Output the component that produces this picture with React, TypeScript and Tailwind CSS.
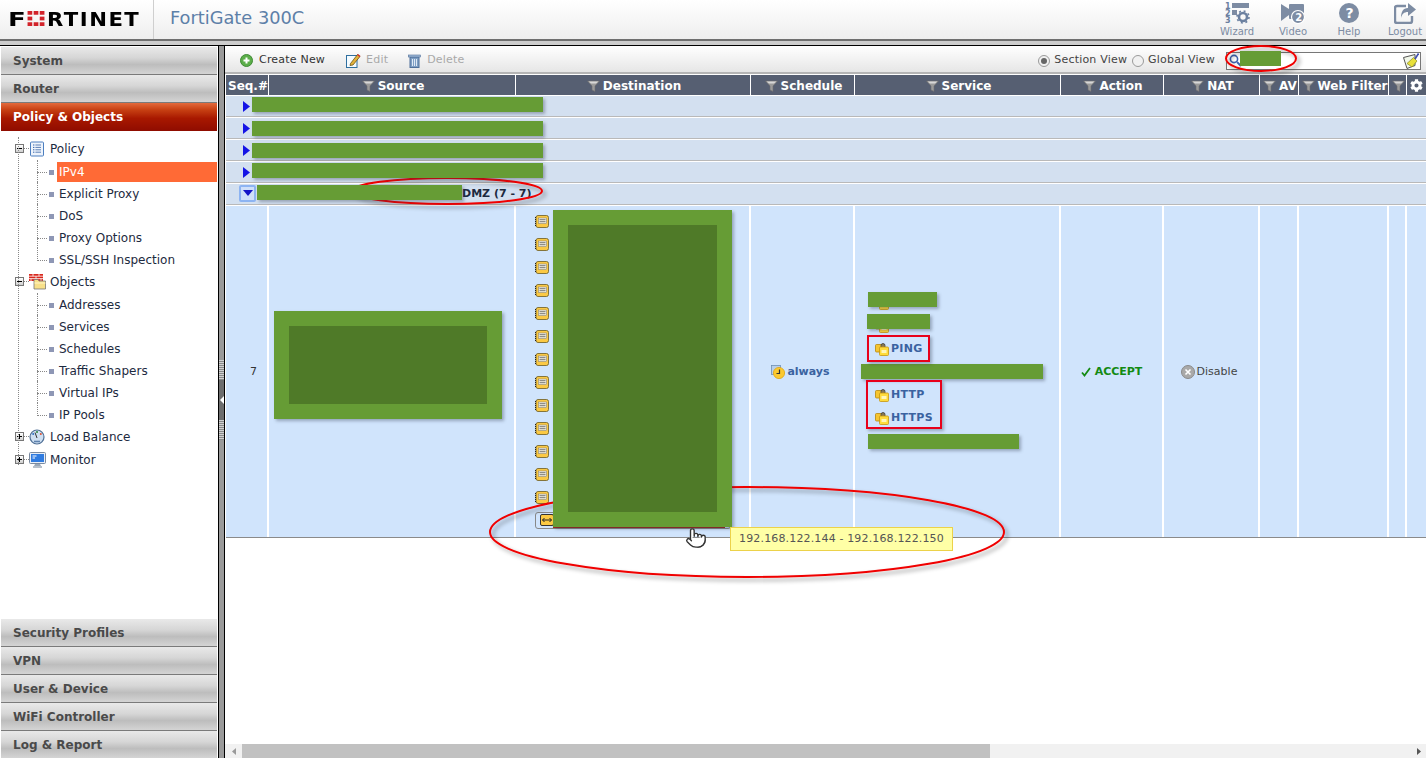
import { FaCog } from "react-icons/fa";
import { Pointer } from "lucide-react";

const topMenu = ["System", "Router"];
const bottomMenu = ["Security Profiles", "VPN", "User & Device", "WiFi Controller", "Log & Report"];
const gridCols = "grid grid-cols-[43px_247px_235px_104px_206px_103px_96px_39px_90px_18px_19px]";

function Funnel() {
  return (
    <svg width="13" height="12" viewBox="0 0 13 12" className="shrink-0">
      <path d="M0.5 1h12L8 6v5.5L5 10V6z" fill="#9a9a9a" stroke="#6d6d6d" strokeWidth="0.6" />
      <path d="M1.5 1.4h10L9 3.4H4z" fill="#d8d8d8" />
    </svg>
  );
}

function AddressIcon() {
  return (
    <svg width="14" height="13" viewBox="0 0 14 13" className="shrink-0">
      <rect x="1" y="0.5" width="12.5" height="12" rx="2" fill="#fbc944" stroke="#6b5a20" strokeWidth="0.8" />
      <rect x="3.5" y="3" width="8" height="5.5" fill="#f4f0e0" stroke="#777" strokeWidth="0.5" />
      <path d="M4.5 4.7h6M4.5 6.7h6" stroke="#555" strokeWidth="0.8" />
      <path d="M0.5 2v9" stroke="#222" strokeWidth="1" strokeDasharray="1 1" />
    </svg>
  );
}

function ServiceIcon() {
  return (
    <svg width="14" height="14" viewBox="0 0 14 14" className="shrink-0">
      <rect x="0.5" y="2.5" width="8" height="7.5" rx="1" fill="#f6c530" stroke="#b8860b" strokeWidth="0.8" />
      <path d="M6 3.5a2 2 0 0 1 4 0v2H6z" fill="#8a7a50" stroke="#3c3c3c" strokeWidth="0.8" />
      <rect x="4.5" y="5" width="9" height="8.5" rx="1" fill="#ffdc3c" stroke="#c6960f" strokeWidth="0.8" />
      <rect x="6.5" y="8" width="5" height="3" fill="#fff6b8" />
    </svg>
  );
}

function ScheduleIcon() {
  return (
    <svg width="14" height="14" viewBox="0 0 14 14" className="shrink-0">
      <rect x="0.5" y="0.5" width="9" height="9" fill="#b9cfe8" stroke="#6f8fb5" strokeWidth="0.8" />
      <circle cx="8" cy="8" r="5.6" fill="#fcc92f" stroke="#e0a410" strokeWidth="0.8" />
      <path d="M8.5 4.5v4H5.5" stroke="#333" strokeWidth="1.2" fill="none" />
    </svg>
  );
}

function PolicyIcon() {
  return (
    <svg width="16" height="16" viewBox="0 0 16 16" className="shrink-0">
      <rect x="1.5" y="1" width="13" height="14" rx="1" fill="#eef4fc" stroke="#4d7fc0" />
      <path d="M4 4h1.4M4 6.4h1.4M4 8.8h1.4M4 11.2h1.4" stroke="#2f5fa8" />
      <path d="M6.4 4H12M6.4 6.4H12M6.4 8.8H12M6.4 11.2H12" stroke="#5b7fb5" />
    </svg>
  );
}

function ObjectsIcon() {
  return (
    <svg width="17" height="17" viewBox="0 0 17 17" className="shrink-0">
      <path d="M0 1h14v7H0z" fill="#d8281e" />
      <path d="M0 3.2h14M0 5.6h14M4 1v2.2M10 1v2.2M7 3.2v2.4M2 5.6V8M12 5.6V8" stroke="#fff" strokeWidth="0.8" />
      <path d="M5 6.5h4l1 1.5h6.5v8H5z" fill="#f7e08a" stroke="#777" strokeWidth="0.8" />
      <path d="M5.5 10h11" stroke="#fff6c8" />
    </svg>
  );
}

function GaugeIcon() {
  return (
    <svg width="16" height="16" viewBox="0 0 16 16" className="shrink-0">
      <circle cx="8" cy="8" r="7" fill="#cfe0f2" stroke="#4f6f95" strokeWidth="1.2" />
      <path d="M8 9L6 3.5" stroke="#333" />
      <circle cx="8" cy="3" r="1" fill="#2a8a3a" />
      <circle cx="11.8" cy="5" r="1" fill="#e05030" />
      <circle cx="4.2" cy="5" r="1" fill="#2f6fc0" />
      <path d="M5 12.5h6" stroke="#5f82ad" strokeWidth="1.6" />
    </svg>
  );
}

function MonitorIcon() {
  return (
    <svg width="17" height="16" viewBox="0 0 17 16" className="shrink-0">
      <rect x="0.5" y="0.5" width="16" height="11" rx="1" fill="#e8eef6" stroke="#7a8aa0" />
      <rect x="2" y="2" width="13" height="8" fill="#2f7be0" />
      <path d="M3.5 4h4M3.5 6h2.5" stroke="#fff" />
      <path d="M6 12h5l1 2H5z" fill="#9aa8b8" />
      <path d="M4 15h9" stroke="#8796a8" strokeWidth="1.2" />
    </svg>
  );
}

function Expander({ open }: { open: boolean }) {
  return (
    <span className="flex size-[9px] shrink-0 items-center justify-center border border-[#777] bg-[linear-gradient(#ffffff,#cfcfcf)]">
      <svg width="7" height="7" viewBox="0 0 7 7">
        <path d={open ? "M1 3.5h5" : "M1 3.5h5M3.5 1v5"} stroke="#000" />
      </svg>
    </span>
  );
}

function RootRow({ label, open, icon }: { label: string; open: boolean; icon: React.ReactNode }) {
  return (
    <div className="flex h-[23px] items-center pl-[14px] text-[12px] text-[#1d2a40]">
      <Expander open={open} />
      <span className="w-[5px] shrink-0 border-t border-dotted border-[#888]" />
      <span className="flex w-[16px] shrink-0 justify-center">{icon}</span>
      <span className="ml-[5px]">{label}</span>
    </div>
  );
}

function LeafRow({ label, active, last }: { label: string; active?: boolean; last?: boolean }) {
  return (
    <div className="relative flex h-[22px] items-center pl-[36px] pt-[2px] text-[12px]">
      <span className={last ? "absolute left-[36px] top-0 h-1/2 border-l border-dotted border-[#888]" : "absolute left-[36px] top-0 h-full border-l border-dotted border-[#888]"} />
      <span className="w-[10px] shrink-0 border-t border-dotted border-[#888]" />
      <span className="ml-[2px] size-[5px] shrink-0 bg-[#8e97b5]" />
      <span
        className={
          active
            ? "ml-[3px] flex h-[20px] flex-1 items-center bg-[#ff6a36] pl-[2px] text-white"
            : "ml-[3px] flex flex-1 items-center pl-[2px] text-[#1d2a40]"
        }
      >
        {label}
      </span>
    </div>
  );
}

function Tree() {
  return (
    <div className="relative flex-1 pt-[6px]">
      <span className="absolute left-[17px] top-[6px] h-[328px] border-l border-dotted border-[#888]" />
      <RootRow label="Policy" open icon={<PolicyIcon />} />
      <LeafRow label="IPv4" active />
      <LeafRow label="Explicit Proxy" />
      <LeafRow label="DoS" />
      <LeafRow label="Proxy Options" />
      <LeafRow label="SSL/SSH Inspection" last />
      <RootRow label="Objects" open icon={<ObjectsIcon />} />
      <LeafRow label="Addresses" />
      <LeafRow label="Services" />
      <LeafRow label="Schedules" />
      <LeafRow label="Traffic Shapers" />
      <LeafRow label="Virtual IPs" />
      <LeafRow label="IP Pools" last />
      <RootRow label="Load Balance" open={false} icon={<GaugeIcon />} />
      <RootRow label="Monitor" open={false} icon={<MonitorIcon />} />
    </div>
  );
}

function MenuBar({ label, active }: { label: string; active?: boolean }) {
  return (
    <div
      className={
        active
          ? "flex h-[28px] shrink-0 items-center pl-[12px] text-[12px] font-bold text-white bg-[linear-gradient(#e46a3c_0%,#c63f12_25%,#a81800_55%,#8f0c00_100%)]"
          : "flex h-[28px] shrink-0 items-center border-b border-[#7a7a7a] pl-[12px] text-[12px] font-bold text-[#4a4a4a] bg-[linear-gradient(#e9e9e9_0%,#d6d6d6_40%,#bdbdbd_65%,#d4d4d4_100%)]"
      }
    >
      {label}
    </div>
  );
}

function Splitter() {
  return (
    <div className="flex w-[7px] shrink-0 flex-col border-x border-black bg-[#9a9a9a]">
      <div className="flex-1" />
      <div className="h-[20px] bg-[repeating-linear-gradient(#d0d0d0_0px,#d0d0d0_1px,#8a8a8a_1px,#8a8a8a_2px)]" />
      <div className="flex h-[40px] items-center justify-center bg-[#6d6d6d]">
        <svg width="4" height="8" viewBox="0 0 4 8">
          <path d="M4 0v8L0 4z" fill="#fff" />
        </svg>
      </div>
      <div className="h-[20px] bg-[repeating-linear-gradient(#d0d0d0_0px,#d0d0d0_1px,#8a8a8a_1px,#8a8a8a_2px)]" />
      <div className="h-[318px]" />
    </div>
  );
}

function HeaderAction({ label, children }: { label: string; children: React.ReactNode }) {
  return (
    <div className="flex w-[56px] flex-col items-center pt-px">
      <div className="flex h-[24px] items-center">{children}</div>
      <span className="text-[10px] leading-[13px] text-[#7d8ca3]">{label}</span>
    </div>
  );
}

function Header() {
  return (
    <header className="flex h-[39px] shrink-0 items-stretch bg-[linear-gradient(#ffffff,#eeeeee)]">
      <div className="flex w-[153px] items-center pb-[2px] pl-[8px]">
        <span className="inline-block w-[19px] origin-left scale-x-[1.3] text-[20px] font-bold leading-none text-black">F</span>
        <svg width="18" height="15" viewBox="0 0 18 16" className="mr-[2px]">
          <g fill="#d2232a">
            <rect x="0" y="0" width="5" height="4" />
            <rect x="6.5" y="0" width="5" height="4" />
            <rect x="13" y="0" width="5" height="4" />
            <rect x="0" y="6" width="5" height="4" />
            <rect x="13" y="6" width="5" height="4" />
            <rect x="0" y="12" width="5" height="4" />
            <rect x="6.5" y="12" width="5" height="4" />
            <rect x="13" y="12" width="5" height="4" />
          </g>
        </svg>
        <span className="origin-left scale-x-[1.06] text-[20px] font-bold leading-none tracking-[1.4px] text-black">RTINET</span>
      </div>
      <div className="w-px bg-[#cfcfcf]" />
      <div className="flex flex-1 items-center pb-[2px] pl-[16px] text-[17.8px] text-[#5d80a8]">FortiGate 300C</div>
      <div className="-mr-[7px] flex items-start">
        <HeaderAction label="Wizard">
          <svg width="25" height="22" viewBox="0 0 25 22">
            <text x="0" y="7" fontSize="8" fontWeight="bold" fill="#6b80a0">1</text>
            <text x="0" y="14" fontSize="8" fontWeight="bold" fill="#6b80a0">2</text>
            <text x="0" y="21" fontSize="8" fontWeight="bold" fill="#6b80a0">3</text>
            <rect x="7" y="1" width="17" height="5" fill="#7d8ca3" />
            <rect x="7" y="8" width="5" height="5" fill="#7d8ca3" />
            <circle cx="18" cy="15" r="4" fill="none" stroke="#6b80a0" strokeWidth="2.6" />
            <circle cx="18" cy="15" r="6" fill="none" stroke="#6b80a0" strokeWidth="1.6" strokeDasharray="2 2.7" />
          </svg>
        </HeaderAction>
        <HeaderAction label="Video">
          <svg width="26" height="22" viewBox="0 0 26 22">
            <path d="M1 2l8 5v6l-8 6z" fill="#7d8ca3" />
            <rect x="9" y="2" width="15" height="15" rx="1" fill="#7d8ca3" />
            <circle cx="18" cy="15" r="6.5" fill="#7d8ca3" stroke="#fff" strokeWidth="1.2" />
            <text x="15.2" y="18.5" fontSize="10" fontWeight="bold" fill="#fff">2</text>
          </svg>
        </HeaderAction>
        <HeaderAction label="Help">
          <svg width="20" height="20" viewBox="0 0 20 20">
            <circle cx="10" cy="10" r="10" fill="#7d8ca3" />
            <text x="6.5" y="15" fontSize="14" fontWeight="bold" fill="#fff">?</text>
          </svg>
        </HeaderAction>
        <HeaderAction label="Logout">
          <svg width="22" height="21" viewBox="0 0 22 21">
            <path d="M12 3H3a2 2 0 0 0-2 2v13a2 2 0 0 0 2 2h13a2 2 0 0 0 2-2v-5" fill="none" stroke="#7d8ca3" strokeWidth="2.4" />
            <path d="M14 0l8 6.5-8 6.5V9c-4 0-6 2-7 6 0-6 2-10 7-10z" fill="#7d8ca3" />
          </svg>
        </HeaderAction>
      </div>
    </header>
  );
}

function Radio({ checked }: { checked?: boolean }) {
  return (
    <span className="flex size-[12px] shrink-0 items-center justify-center rounded-full border border-[#9a9a9a] bg-[#f1f1f1]">
      {checked && <span className="size-[6px] rounded-full bg-[#666]" />}
    </span>
  );
}

function Toolbar() {
  return (
    <div className="flex h-[28px] shrink-0 items-center border-b-2 border-[#b5b5b5] bg-[linear-gradient(#ffffff,#e6e6e6)] pl-[15px] pr-[5px] pt-[3px] text-[11px] tracking-[0.2px]">
      <svg width="13" height="13" viewBox="0 0 13 13" className="shrink-0">
        <circle cx="6.5" cy="6.5" r="6" fill="#5cae4a" stroke="#3f8a35" />
        <path d="M6.5 3.5v6M3.5 6.5h6" stroke="#fff" strokeWidth="2" />
      </svg>
      <span className="ml-[6px] text-[#333]">Create New</span>
      <svg width="15" height="15" viewBox="0 0 15 15" className="ml-[21px] shrink-0">
        <rect x="0.5" y="2.5" width="10.5" height="12" fill="#f4fbff" stroke="#2f6f9f" />
        <path d="M4.5 10.5L11.5 1.5l2.5 2L7 12 4 12.5z" fill="#e2b23a" stroke="#5a4208" strokeWidth="0.7" />
        <path d="M11.5 1.5l2.5 2" stroke="#d03030" strokeWidth="1.6" />
      </svg>
      <span className="ml-[5px] text-[#a9a9a9]">Edit</span>
      <svg width="13" height="14" viewBox="0 0 13 14" className="ml-[20px] shrink-0">
        <rect x="2" y="3" width="9" height="10.5" fill="#7f9fc4" stroke="#4f6f99" />
        <rect x="0.5" y="1" width="12" height="2" fill="#9fb8d6" stroke="#4f6f99" strokeWidth="0.6" />
        <path d="M4.5 5v7M6.5 5v7M8.5 5v7" stroke="#dfe9f5" />
      </svg>
      <span className="ml-[6px] text-[#a9a9a9]">Delete</span>
      <div className="flex-1" />
      <Radio checked />
      <span className="ml-[4px] text-[#444]">Section View</span>
      <span className="ml-[5px]"><Radio /></span>
      <span className="ml-[4px] text-[#444]">Global View</span>
      <div className="ml-[11px] flex h-[18px] w-[195px] items-center justify-between border border-[#777] bg-white pl-[2px] pr-[1px]">
        <svg width="13" height="13" viewBox="0 0 13 13">
          <circle cx="5" cy="5" r="3.6" fill="#fff" stroke="#3f63b0" strokeWidth="1.6" />
          <path d="M8 8l4 4" stroke="#3f63b0" strokeWidth="2" />
        </svg>
        <svg width="16" height="16" viewBox="0 0 16 16">
          <path d="M0.5 4.5L12 1.5v11l-8 3z" fill="#f2f8ea" stroke="#555" />
          <path d="M4 10.5L10.5 4.5l3.5 3.5-5 6z" fill="#e8e03a" stroke="#8a8a20" strokeWidth="0.7" />
          <path d="M12 6l3.5-5.5" stroke="#3f4fb0" strokeWidth="1.6" />
        </svg>
      </div>
    </div>
  );
}

function HeadCell({ label, filter = true }: { label?: string; filter?: boolean }) {
  return (
    <div className="flex items-center justify-center gap-[3px] overflow-hidden whitespace-nowrap border-r border-white pl-[2px] pt-px text-[12px] font-bold text-white">
      {filter && <Funnel />}
      {label}
    </div>
  );
}

function TableHead() {
  return (
    <div className={`${gridCols} mt-[1px] h-[21px] shrink-0 border-b border-white bg-[#565f72]`}>
      <HeadCell label="Seq.#" filter={false} />
      <HeadCell label="Source" />
      <HeadCell label="Destination" />
      <HeadCell label="Schedule" />
      <HeadCell label="Service" />
      <HeadCell label="Action" />
      <HeadCell label="NAT" />
      <HeadCell label="AV" />
      <HeadCell label="Web Filter" />
      <HeadCell />
      <div className="flex items-center justify-center text-white">
        <FaCog size={13} />
      </div>
    </div>
  );
}

function SectionRow() {
  return (
    <div className="flex h-[22px] shrink-0 items-center border-b border-b-white bg-[#d3e0f0] pl-[17px] shadow-[inset_0_-1px_0_#b9b9b9]">
      <svg width="7" height="11" viewBox="0 0 7 11" className="mb-px">
        <path d="M0 0l7 5.5L0 11z" fill="#1414e6" />
      </svg>
    </div>
  );
}

function OpenSectionRow() {
  return (
    <div className="flex h-[22px] shrink-0 items-center border-b border-b-white bg-[#d3e0f0] pl-[13px] shadow-[inset_0_-1px_0_#b9b9b9]">
      <span className="mb-[3px] flex size-[17px] shrink-0 items-center justify-center rounded-[2px] border-2 border-[#8db4f2] bg-[#cfe0fa]">
        <svg width="10" height="6" viewBox="0 0 10 6">
          <path d="M0 0h10L5 6z" fill="#1414c8" />
        </svg>
      </span>
      <span className="ml-[206px] text-[11px] font-bold text-[#1d2a40]">DMZ (7 - 7)</span>
    </div>
  );
}

function BodyCell({ children }: { children?: React.ReactNode }) {
  return (
    <div className="flex items-center justify-center overflow-hidden border-r-2 border-white bg-[#d0e4fc] pt-px text-[11px]">
      {children}
    </div>
  );
}

function ServiceRow({ label }: { label?: string }) {
  return (
    <div className="flex h-[23px] items-center pl-[20px] font-bold tracking-[0.3px] text-[#3a62a0]">
      <ServiceIcon />
      <span className="ml-[2px] mt-[2px]">{label}</span>
    </div>
  );
}

function PolicyRow() {
  return (
    <div className={`${gridCols} h-[332px] shrink-0 border-b border-[#8a8a8a]`}>
      <BodyCell><span className="pl-[14px] text-[#333]">7</span></BodyCell>
      <BodyCell />
      <div className="flex flex-col justify-center overflow-hidden border-r-2 border-white bg-[#d0e4fc] pb-[2px] pl-[19px]">
        {Array.from({ length: 13 }, (_, i) => (
          <div key={i} className="flex h-[23px] items-center">
            <AddressIcon />
          </div>
        ))}
        <div className="flex h-[23px] items-center">
          <div className="flex h-[17px] w-[196px] items-center rounded-[3px] border border-[#888] pl-[2px]">
            <svg width="14" height="12" viewBox="0 0 14 12" className="ml-[2px]">
              <rect x="0.5" y="0.5" width="13" height="11" rx="1.5" fill="#fbc944" stroke="#333" />
              <path d="M2.5 6h9M2.5 6l2-2M2.5 6l2 2M11.5 6l-2-2M11.5 6l-2 2" stroke="#222" fill="none" />
            </svg>
          </div>
        </div>
      </div>
      <BodyCell>
        <span className="flex items-center gap-[2px] pr-[3px] font-bold text-[#3a62a0]">
          <ScheduleIcon />
          always
        </span>
      </BodyCell>
      <div className="flex flex-col justify-center overflow-hidden border-r-2 border-white bg-[#d0e4fc] text-[11px]">
        <ServiceRow />
        <ServiceRow />
        <ServiceRow label="PING" />
        <ServiceRow />
        <ServiceRow label="HTTP" />
        <ServiceRow label="HTTPS" />
        <ServiceRow />
      </div>
      <BodyCell>
        <span className="flex items-center gap-[4px] font-bold text-[#138a13]">
          <svg width="10" height="10" viewBox="0 0 10 10">
            <path d="M1 5.5l2.5 3L9 1" fill="none" stroke="#138a13" strokeWidth="1.8" />
          </svg>
          ACCEPT
        </span>
      </BodyCell>
      <BodyCell>
        <span className="flex items-center gap-[2px] pr-[4px] text-[#444]">
          <svg width="14" height="14" viewBox="0 0 14 14">
            <circle cx="7" cy="7" r="6.5" fill="#a9a9a9" stroke="#8a8a8a" />
            <path d="M4.5 4.5l5 5M9.5 4.5l-5 5" stroke="#fff" strokeWidth="1.6" />
          </svg>
          Disable
        </span>
      </BodyCell>
      <BodyCell />
      <BodyCell />
      <BodyCell />
      <div className="bg-[#d0e4fc]" />
    </div>
  );
}

function HScrollbar() {
  return (
    <div className="flex h-[14px] shrink-0 items-center bg-[#f1f1f1]">
      <div className="flex w-[17px] shrink-0 justify-center">
        <svg width="4" height="7" viewBox="0 0 4 7">
          <path d="M4 0v7L0 3.5z" fill="#9a9a9a" />
        </svg>
      </div>
      <div className="h-full w-[748px] bg-[#c1c1c1]" />
      <div className="flex flex-1 justify-end pr-[5px]">
        <svg width="4" height="7" viewBox="0 0 4 7">
          <path d="M0 0v7l4-3.5z" fill="#555" />
        </svg>
      </div>
    </div>
  );
}

// annotations painted over the screenshot: redactions, red ellipses, tooltip
function Annotations() {
  const block = "absolute bg-[#669c35] shadow-[2px_2px_3px_rgba(40,50,70,0.35)]";
  return (
    <div className="pointer-events-none absolute inset-0">
      <svg width="1426" height="758" viewBox="0 0 1426 758" className="absolute left-0 top-0">
        <defs>
          <filter id="sh" x="-10%" y="-30%" width="120%" height="160%">
            <feDropShadow dx="3" dy="3" stdDeviation="2" floodColor="#000" floodOpacity="0.4" />
          </filter>
        </defs>
        <g fill="none" stroke="#f00000" strokeWidth="2" filter="url(#sh)">
          <ellipse cx="1261" cy="58.5" rx="35" ry="12.5" />
          <ellipse cx="447" cy="191" rx="95" ry="13" />
          <ellipse cx="747" cy="532" rx="257" ry="45" />
        </g>
      </svg>

      <div className="absolute left-[553px] top-[526px] h-[2px] w-[172px] bg-[#a52a1a]" />

      <div className={`${block} left-[252px] top-[97px] h-[15px] w-[291px]`} />
      <div className={`${block} left-[252px] top-[121px] h-[15px] w-[291px]`} />
      <div className={`${block} left-[252px] top-[143px] h-[15px] w-[291px]`} />
      <div className={`${block} left-[252px] top-[163px] h-[15px] w-[291px]`} />
      <div className={`${block} left-[257px] top-[185px] h-[15px] w-[205px]`} />

      <div className={`${block} left-[274px] top-[311px] flex h-[108px] w-[228px] p-[15px]`}>
        <div className="flex-1 bg-[#4f7a28]" />
      </div>
      <div className={`${block} left-[553px] top-[210px] flex h-[317px] w-[179px] p-[15px]`}>
        <div className="flex-1 bg-[#4f7a28]" />
      </div>

      <div className={`${block} left-[868px] top-[292px] h-[15px] w-[69px]`} />
      <div className={`${block} left-[867px] top-[314px] h-[15px] w-[63px]`} />
      <div className={`${block} left-[861px] top-[364px] h-[15px] w-[182px]`} />
      <div className={`${block} left-[868px] top-[434px] h-[15px] w-[151px]`} />
      <div className="absolute left-[1240px] top-[51px] h-[15px] w-[41px] bg-[#669c35]" />

      <div className="absolute left-[867px] top-[335px] h-[27px] w-[63px] border-2 border-[#e8001a] shadow-[2px_2px_3px_rgba(40,50,70,0.35)]" />
      <div className="absolute left-[866px] top-[380px] h-[49px] w-[76px] border-2 border-[#e8001a] shadow-[2px_2px_3px_rgba(40,50,70,0.35)]" />

      <div className="absolute left-[730px] top-[527px] flex h-[24px] w-[223px] items-center justify-center border border-[#ecd24a] bg-[#ffffa6] text-[11px] tracking-[0.15px] text-[#555]">
        192.168.122.144 - 192.168.122.150
      </div>

      <Pointer size={22} strokeWidth={1.5} className="absolute left-[685px] top-[527px] fill-white text-[#333]" />
    </div>
  );
}

export default function App() {
  return (
    <div className="relative flex h-[758px] w-[1426px] flex-col overflow-hidden bg-white font-['DejaVu_Sans',sans-serif]">
      <Header />
      <div className="h-[6px] shrink-0 border-t-2 border-[#6f6f6f] bg-[#cdcdcd]" />
      <div className="flex min-h-0 flex-1 border-t border-black">
        <aside className="-mb-px flex w-[218px] shrink-0 flex-col bg-white pl-px pr-px pt-px">
          {topMenu.map((m) => (
            <MenuBar key={m} label={m} />
          ))}
          <MenuBar label="Policy & Objects" active />
          <Tree />
          {bottomMenu.map((m) => (
            <MenuBar key={m} label={m} />
          ))}
        </aside>
        <Splitter />
        <main className="flex min-w-0 flex-1 flex-col bg-white">
          <Toolbar />
          <div className="flex min-h-0 flex-1 flex-col pl-px">
            <TableHead />
            <SectionRow />
            <SectionRow />
            <SectionRow />
            <SectionRow />
            <OpenSectionRow />
            <PolicyRow />
            <div className="flex-1" />
          </div>
          <HScrollbar />
        </main>
      </div>
      <Annotations />
    </div>
  );
}
